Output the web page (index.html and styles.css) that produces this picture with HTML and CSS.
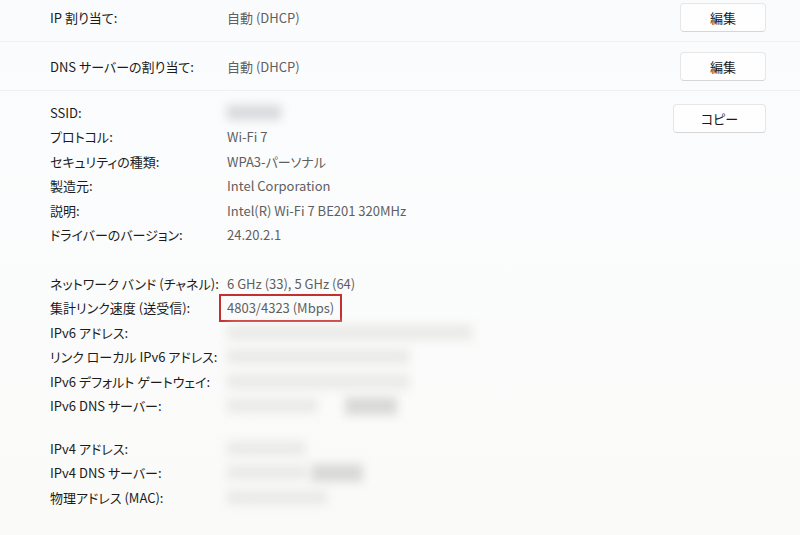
FILE: index.html
```html
<!DOCTYPE html>
<html lang="ja">
<head>
<meta charset="utf-8">
<title>Wi-Fi プロパティ</title>
<link rel="stylesheet" href="styles.css">
</head>
<body>
<div class="page">
  <div class="setting first">
    <span class="label">IP 割り当て:</span>
    <span class="value">自動 (DHCP)</span>
    <button class="btn edit">編集</button>
  </div>
  <div class="setting">
    <span class="label">DNS サーバーの割り当て:</span>
    <span class="value">自動 (DHCP)</span>
    <button class="btn edit">編集</button>
  </div>
  <div class="details">
    <div class="props">
      <div class="group">
        <div class="line"><span class="label">SSID:</span><span class="value"><span class="blur mid" style="width:54px"></span></span></div>
        <div class="line"><span class="label">プロトコル:</span><span class="value">Wi-Fi 7</span></div>
        <div class="line"><span class="label">セキュリティの種類:</span><span class="value">WPA3-パーソナル</span></div>
        <div class="line"><span class="label">製造元:</span><span class="value">Intel Corporation</span></div>
        <div class="line"><span class="label">説明:</span><span class="value">Intel(R) Wi-Fi 7 BE201 320MHz</span></div>
        <div class="line"><span class="label">ドライバーのバージョン:</span><span class="value">24.20.2.1</span></div>
      </div>
      <div class="group g2">
        <div class="line"><span class="label">ネットワーク バンド (チャネル):</span><span class="value">6 GHz (33), 5 GHz (64)</span></div>
        <div class="line"><span class="label">集計リンク速度 (送受信):</span><span class="value"><span class="highlight">4803/4323 (Mbps)</span></span></div>
        <div class="line"><span class="label">IPv6 アドレス:</span><span class="value"><span class="blur" style="width:245px"></span></span></div>
        <div class="line"><span class="label">リンク ローカル IPv6 アドレス:</span><span class="value"><span class="blur" style="width:182px"></span></span></div>
        <div class="line"><span class="label">IPv6 デフォルト ゲートウェイ:</span><span class="value"><span class="blur" style="width:182px"></span></span></div>
        <div class="line"><span class="label">IPv6 DNS サーバー:</span><span class="value"><span class="blur" style="width:90px"></span><span class="blur dark" style="width:52px;margin-left:28px"></span></span></div>
      </div>
      <div class="group g3">
        <div class="line"><span class="label">IPv4 アドレス:</span><span class="value"><span class="blur" style="width:78px"></span></span></div>
        <div class="line"><span class="label">IPv4 DNS サーバー:</span><span class="value"><span class="blur" style="width:80px"></span><span class="blur dark" style="width:52px;margin-left:4px"></span></span></div>
        <div class="line"><span class="label">物理アドレス (MAC):</span><span class="value"><span class="blur" style="width:100px"></span></span></div>
      </div>
    </div>
    <button class="btn copy">コピー</button>
  </div>
</div>
</body>
</html>
```

FILE: styles.css
```css
* { box-sizing: border-box; }
html, body { margin: 0; padding: 0; }
body {
  width: 800px;
  height: 535px;
  overflow: hidden;
  background: linear-gradient(180deg, #f9fbfd 0%, #fbfcfd 30%, #fafaf8 100%);
  font-family: "Noto Sans CJK JP", "Noto Sans", sans-serif;
  font-feature-settings: "palt";
  font-size: 13px;
  color: #1b1b1b;
}
.page { display: flex; flex-direction: column; }
.setting {
  height: 49px;
  display: flex;
  align-items: center;
  padding: 0 34px 0 50px;
  border-bottom: 1px solid #eef0f2;
}
.setting.first { margin-top: -7px; }
.setting .label { width: 177px; }
.setting .value { flex: 1; }
.label { color: #1b1b1b; }
.value { color: #5f5f5f; display: flex; align-items: center; }
.btn {
  font-family: inherit;
  font-feature-settings: "palt";
  font-size: 13px;
  color: #1b1b1b;
  background: #fefefe;
  border: 1px solid #e6e6e6;
  border-bottom-color: #d6d6d6;
  border-radius: 4px;
  height: 29px;
  padding: 0;
}
.btn.edit { width: 86px; }
.btn.copy { width: 93px; margin-top: 4px; }
.details {
  display: flex;
  align-items: flex-start;
  justify-content: space-between;
  padding: 9px 34px 0 50px;
}
.props { display: flex; flex-direction: column; }
.group { display: flex; flex-direction: column; }
.g2 { margin-top: 24px; }
.g3 { margin-top: 18px; }
.line { display: flex; height: 24.5px; align-items: center; }
.line .label { width: 177px; flex: none; }
.highlight {
  display: inline-block;
  border: 2px solid #c62f2f;
  padding: 3px 6px 3px 6px;
  margin-left: -8px;
  line-height: 18px;
}
.blur {
  display: inline-block;
  height: 15px;
  background: #eaeae8;
  filter: blur(5px);
}
.blur.mid { background: #d8dadd; }
.blur.dark { background: #d9d9d7; height: 18px; }
```
